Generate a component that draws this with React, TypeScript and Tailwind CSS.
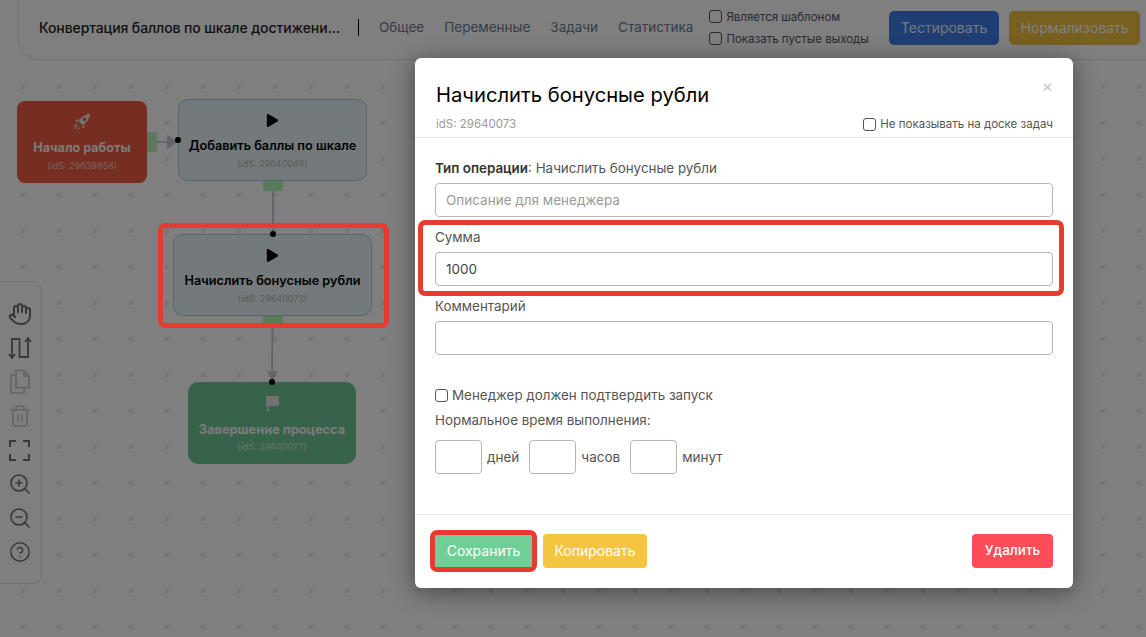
import { Hand, ZoomIn, ZoomOut, CircleHelp, Trash2 } from "lucide-react";
import { FaPlay } from "react-icons/fa";

const FONT = "font-['Inter','Noto_Sans',sans-serif]";

const Dots = () => (
  <svg className="absolute inset-0 h-full w-full">
    <defs>
      <pattern id="dots" x="21" y="13" width="36" height="36" patternUnits="userSpaceOnUse">
        <rect width="4" height="4" fill="#e8e8e8" />
      </pattern>
    </defs>
    <rect width="100%" height="100%" fill="url(#dots)" />
  </svg>
);

const Check = ({ className = "" }: { className?: string }) => (
  <span className={`inline-block h-[13px] w-[13px] shrink-0 rounded-[3px] border border-[#555] bg-white ${className}`} />
);

const Header = () => (
  <header className="absolute left-[18px] right-0 top-0 flex h-[60px] items-center rounded-bl-[20px] border-b border-l border-[#e4e4e4] bg-white pb-[4px] pl-[20px] pr-[6px]">
    <div className="w-[297px] whitespace-nowrap text-[14px] font-medium tracking-[-0.1px] text-[#222]">Конвертация баллов по шкале достижени…</div>
    <div className="ml-[22px] h-[17px] w-px bg-black" />
    <nav className="ml-[20px] flex gap-[20px] text-[13.5px] text-[#6b7a90]">
      <span>Общее</span>
      <span>Переменные</span>
      <span>Задачи</span>
      <span>Статистика</span>
    </nav>
    <div className="ml-[16px] flex flex-col gap-[8px] text-[11.5px] leading-[14px] text-[#4a5568]">
      <label className="flex items-center gap-[4px]"><Check />Является шаблоном</label>
      <label className="flex items-center gap-[4px]"><Check />Показать пустые выходы</label>
    </div>
    <button className="ml-auto flex h-[34px] w-[110px] items-center justify-center rounded-[5px] bg-[#3e7fe8] text-[14px] text-[#e8eefc]">Тестировать</button>
    <button className="ml-[10px] flex h-[34px] w-[131px] items-center justify-center rounded-[5px] bg-[#f0c040] text-[14px] text-white">Нормализовать</button>
  </header>
);

const CopyIcon = () => (
  <svg width="22" height="26" viewBox="0 0 22 26" fill="none" stroke="currentColor" strokeWidth="1.6">
    <path d="M7 1.5h8l5 5.5v11.5H7z" />
    <path d="M15 1.5V7h5" />
    <path d="M7 6H2v18h13v-5.500" />
  </svg>
);

const SwapIcon = () => (
  <svg width="24" height="22" viewBox="0 0 24 22" fill="none" stroke="currentColor" strokeWidth="1.8">
    <path d="M4 20V2h7.500v18H20V2" />
    <path d="M1 17l3 4 3-4M17 5l3-4 3 4" />
  </svg>
);

const FrameIcon = () => (
  <svg width="21" height="21" viewBox="0 0 21 21" fill="none" stroke="currentColor" strokeWidth="2">
    <path d="M1 7V1h6M14 1h6v6M20 14v6h-6M7 20H1v-6" />
  </svg>
);

const RocketIcon = () => (
  <svg width="18" height="18" viewBox="0 0 17 17" className="text-[#e8e8e8]">
    <path
      fillRule="evenodd"
      fill="currentColor"
      d="M16 1C11 1.500 7.500 4 5.500 8L9 11.500C13 9.500 15.500 6 16 1zM11 4.200a1.800 1.800 0 1 1 0 3.600a1.800 1.800 0 0 1 0-3.600z"
    />
    <path fill="currentColor" d="M5.500 5.500L2 7l2.300 1.800zM11.500 11.500L10 15l-1.800-2.300z" />
    <path stroke="currentColor" strokeWidth="1" d="M4.500 11.500L1 15M3 10.500L1 12.500M6.500 13.500L4.500 15.500" />
  </svg>
);

const FlagIcon = () => (
  <svg width="13" height="15" viewBox="0 0 13 15" className="text-[#e4e4e4]">
    <path fill="currentColor" d="M0 0h13v10H2.500v4H3.500v1H0v-1h1V10H0z" />
  </svg>
);

const Toolbar = () => (
  <aside className="absolute left-[-4px] top-[281px] flex h-[303px] w-[46px] flex-col items-center rounded-r-[10px] border border-[#dcdcdc] bg-white pl-[1px] pt-[15px] text-[#707070]">
    <div className="flex h-[34px] items-center justify-center"><Hand size={24} /></div>
    <div className="flex h-[34px] items-center justify-center"><SwapIcon /></div>
    <div className="flex h-[34px] items-center justify-center text-[#c8c8c8]"><CopyIcon /></div>
    <div className="flex h-[34px] items-center justify-center text-[#c8c8c8]"><Trash2 size={24} strokeWidth={1.6} /></div>
    <div className="flex h-[34px] items-center justify-center"><FrameIcon /></div>
    <div className="flex h-[34px] items-center justify-center"><ZoomIn size={24} strokeWidth={1.6} /></div>
    <div className="flex h-[34px] items-center justify-center"><ZoomOut size={24} strokeWidth={1.6} /></div>
    <div className="flex h-[34px] items-center justify-center"><CircleHelp size={22} strokeWidth={1.6} /></div>
  </aside>
);

const ActionNode = ({ title, ids, className }: { title: string; ids: string; className: string }) => (
  <div className={`absolute flex h-[82px] flex-col items-center rounded-[10px] border border-[#a9ccd8] bg-[#e8f4f6] pt-[14px] ${className}`}>
    <FaPlay size={13} className="text-black" />
    <div className="mt-[11px] text-[12.7px] font-semibold leading-[16px] text-black">{title}</div>
    <div className="mt-[4px] text-[9px] leading-[12px] text-[#b4b4b4]">{ids}</div>
  </div>
);

const Diagram = () => (
  <>
    <svg className="absolute inset-0 h-full w-full">
      <path d="M157 142h16" stroke="#c8c8d8" strokeWidth="2" />
      <path d="M167 135l11 7-11 7z" fill="#c8c8d8" />
      <path d="M273 190v44" stroke="#c8c8d8" strokeWidth="2" />
      <path d="M272.500 324L272 380" stroke="#c8c8d8" strokeWidth="2" />
      <path d="M267 371h11l-5.500 11z" fill="#c8c8d8" />
    </svg>

    <div className="absolute left-[17px] top-[101px] flex h-[82px] w-[130px] flex-col items-center rounded-[8px] bg-[#ec5a44] pt-[12px] text-[#f4f4f4]">
      <RocketIcon />
      <div className="mt-[9px] text-[12.6px] font-bold leading-[16px]">Начало работы</div>
      <div className="mt-[4px] text-[9px] leading-[12px] opacity-70">(idS: 29639858)</div>
    </div>
    <div className="absolute left-[147px] top-[132px] h-[20px] w-[10px] rounded-r-[2px] bg-[#b7f5b7]" />

    <ActionNode title="Добавить баллы по шкале" ids="(idS: 29640048)" className="left-[178px] top-[99px] w-[189px]" />
    <div className="absolute left-[263px] top-[181px] h-[10px] w-[20px] rounded-b-[2px] bg-[#b7f5b7]" />

    <ActionNode title="Начислить бонусные рубли" ids="(idS: 29640073)" className="left-[173px] top-[234px] w-[199px]" />
    <div className="absolute left-[263px] top-[316px] h-[8px] w-[20px] bg-[#b7f5b7]" />

    <div className="absolute left-[188px] top-[382px] flex h-[82px] w-[168px] flex-col items-center rounded-[10px] bg-[#6cc794] pt-[14px] text-[#f4f4f4]">
      <FlagIcon />
      <div className="mt-[11px] text-[12.8px] font-bold leading-[16px]">Завершение процесса</div>
      <div className="mt-[3px] text-[9px] leading-[12px] opacity-70">(idS: 29640077)</div>
    </div>

    <span className="absolute left-[175px] top-[137px] h-[6px] w-[6px] rounded-full bg-black" />
    <span className="absolute left-[270px] top-[231px] h-[6px] w-[6px] rounded-full bg-black" />
    <span className="absolute left-[269px] top-[379px] h-[6px] w-[6px] rounded-full bg-black" />
  </>
);

const Field = ({ value, placeholder }: { value?: string; placeholder?: string }) => (
  <div className={`flex h-[34px] items-center rounded-[4px] border border-[#b5b5c3] px-[10px] text-[13.5px] ${value ? "text-[#444]" : "text-[#9a9a9a]"}`}>
    {value ?? placeholder}
  </div>
);

const TimeBox = ({ label, className = "" }: { label: string; className?: string }) => (
  <div className={`flex items-center ${className}`}>
    <div className="h-[34px] w-[47px] rounded-[4px] border border-[#b5b5c3]" />
    <span className="ml-[5px] text-[13.5px] text-[#555]">{label}</span>
  </div>
);

const Modal = () => (
  <div className="absolute left-[415px] top-[58px] flex h-[530px] w-[658px] flex-col rounded-[6px] bg-white shadow-[0_4px_24px_rgba(0,0,0,0.45)]">
    <div className="relative h-[80px] border-b border-[#e4e4e4] pl-[21px] pr-[20px]">
      <h2 className="pt-[23px] text-[20.200px] font-normal leading-[28px] text-black">Начислить бонусные рубли</h2>
      <div className="mt-[7px] flex items-center justify-between text-[11.5px] leading-[16px]">
        <span className="text-[#999]">idS: 29640073</span>
        <label className="ml-auto flex items-center gap-[4px] text-[#555]"><Check />Не показывать на доске задач</label>
      </div>
      <span className="absolute right-[20px] top-[19px] text-[17px] leading-[18px] text-[#c4c4c4]">×</span>
    </div>

    <div className="flex flex-1 flex-col px-[20px] pt-[21px]">
      <div className="text-[13.4px] leading-[18px] text-[#555]"><b className="font-semibold text-[#333]">Тип операции</b>: Начислить бонусные рубли</div>
      <div className="mt-[6px]"><Field placeholder="Описание для менеджера" /></div>
      <div className="mt-[11px] text-[13.4px] leading-[18px] text-[#555]">Сумма</div>
      <div className="mt-[6px]"><Field value="1000" /></div>
      <div className="mt-[11px] text-[13.4px] leading-[18px] text-[#555]">Комментарий</div>
      <div className="mt-[6px]"><Field /></div>
      <label className="mt-[31px] flex items-center gap-[4px] text-[13.4px] leading-[18px] text-[#555]"><Check />Менеджер должен подтвердить запуск</label>
      <div className="mt-[7px] text-[13.4px] leading-[18px] text-[#555]">Нормальное время выполнения:</div>
      <div className="mt-[11px] flex">
        <TimeBox label="дней" />
        <TimeBox label="часов" className="ml-[10px]" />
        <TimeBox label="минут" className="ml-[10px]" />
      </div>
    </div>

    <div className="flex h-[74px] items-center border-t border-[#e4e4e4] px-[20px] pb-[2px]">
      <button className="flex h-[34px] w-[97px] items-center justify-center rounded-[4px] bg-[#6fcf97] text-[14px] text-white">Сохранить</button>
      <button className="ml-[11px] flex h-[34px] w-[104px] items-center justify-center rounded-[4px] bg-[#f5c542] text-[14px] text-white">Копировать</button>
      <button className="ml-auto flex h-[34px] w-[81px] items-center justify-center rounded-[4px] bg-[#ff4d57] text-[13.5px] font-medium text-white">Удалить</button>
    </div>
  </div>
);

const Highlight = ({ className }: { className: string }) => (
  <div className={`absolute rounded-[7px] border-[5px] border-[#e63c30] ${className}`} />
);

export default function App() {
  return (
    <div className={`relative h-[637px] w-[1146px] overflow-hidden bg-white ${FONT}`}>
      <Dots />
      <Diagram />
      <Header />
      <Toolbar />
      <div className="absolute inset-0 bg-black/50" />
      <Highlight className="left-[158px] top-[223px] h-[105px] w-[231px]" />
      <Modal />
      <Highlight className="left-[418px] top-[220px] h-[76px] w-[646px]" />
      <Highlight className="left-[430px] top-[530px] h-[42px] w-[107px] border-[4px]" />
    </div>
  );
}
